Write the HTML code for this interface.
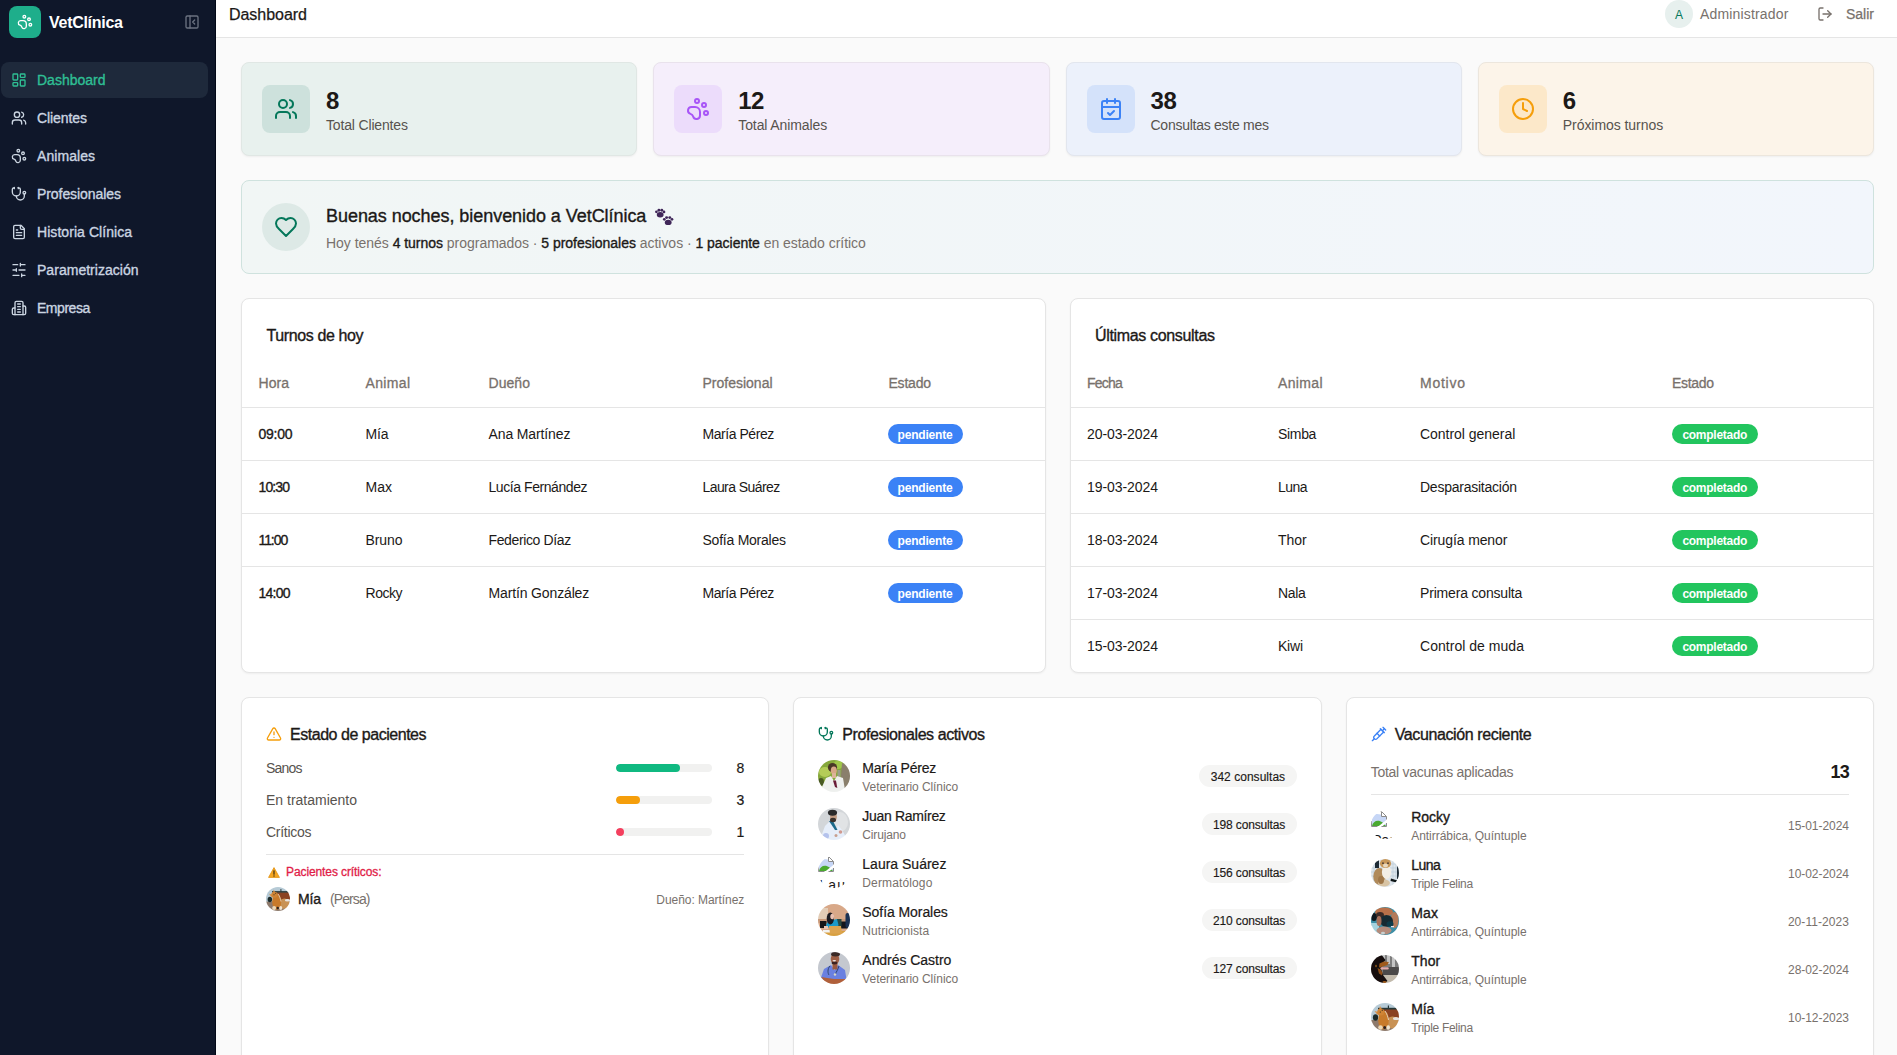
<!DOCTYPE html>
<html lang="es">
<head>
<meta charset="utf-8">
<title>VetClínica - Dashboard</title>
<style>
*{box-sizing:border-box;margin:0;padding:0}
html,body{width:1897px;height:1055px;overflow:hidden}
body{font-family:"Liberation Sans",sans-serif;background:#fafafa;color:#1c1917;font-size:14px;line-height:20px;position:relative}
svg{display:block}
.ic{fill:none;stroke:currentColor;stroke-width:2;stroke-linecap:round;stroke-linejoin:round}
.sb{position:absolute;left:0;top:0;width:216px;height:1055px;background:#0f172a;color:#cbd5e1;border-right:1px solid #020817}
.sb .logo{position:absolute;left:9px;top:6px;width:32px;height:32px;border-radius:8px;background:#1eae8b;color:#fff;display:flex;align-items:center;justify-content:center}
.sb .brand{position:absolute;left:49px;top:12px;font-size:16px;line-height:22px;font-weight:700;color:#fff;white-space:nowrap}
.sb .col{position:absolute;left:184px;top:14px;color:#6b7280}
.nav{position:absolute;left:1px;top:62px;width:207px}
.nav a{display:flex;align-items:center;height:36px;margin-bottom:2px;border-radius:8px;padding-left:10px;color:#cbd5e1;text-decoration:none;font-weight:400;-webkit-text-stroke:.35px;font-size:14px;white-space:nowrap}
.nav a svg{margin-right:10px;flex:none}
.nav a.on{background:#1e293b;color:#2fbf94}
.hd{position:absolute;left:216px;top:0;width:1681px;height:38px;background:#fff;border-bottom:1px solid #e5e5e5}
.hd h1{position:absolute;left:13px;top:4px;font-size:16px;line-height:22px;font-weight:400;-webkit-text-stroke:.25px;color:#1c1917;white-space:nowrap}
.hd .av{position:absolute;left:1449px;top:0;width:28px;height:28px;border-radius:50%;background:#e7f0ee;color:#04775a;font-size:12px;line-height:30px;text-align:center}
.hd .adm{position:absolute;left:1484px;top:4px;color:#78716c;white-space:nowrap}
.hd .out{position:absolute;left:1601px;top:6px;color:#78716c}
.hd .salir{position:absolute;left:1630px;top:4px;color:#78716c;-webkit-text-stroke:.25px;white-space:nowrap}
.card{position:absolute;background:#fff;border:1px solid #e5e5e5;border-radius:8px;box-shadow:0 1px 2px rgba(0,0,0,.05)}
.stat{top:62px;width:396.25px;height:94px}
.stat .ib{position:absolute;left:20px;top:22px;width:48px;height:48px;border-radius:8px;display:flex;align-items:center;justify-content:center}
.stat .n{position:absolute;left:84px;top:22px;font-size:24px;line-height:32px;font-weight:700;color:#1c1917;white-space:nowrap}
.stat .l{position:absolute;left:84px;top:52px;font-size:14px;line-height:20px;color:#57534e;white-space:nowrap}
.ban{left:241px;top:180px;width:1633px;height:94px;border-color:#cfe2de;background:linear-gradient(90deg,#f1f6f5,#f2f6fc);box-shadow:none}
.ban .ib{position:absolute;left:20px;top:22px;width:48px;height:48px;border-radius:50%;background:#dde9e6;color:#04775a;display:flex;align-items:center;justify-content:center}
.ban .t{position:absolute;left:84px;top:21px;font-size:18px;line-height:28px;color:#1c1917;white-space:nowrap;-webkit-text-stroke:.35px}
.ban .s{position:absolute;left:84px;top:52px;font-size:14px;line-height:20px;color:#78716c;white-space:nowrap;letter-spacing:-.030px}
.ban .s b{color:#1c1917;font-weight:400;-webkit-text-stroke:.35px}

.tb{top:298px;width:804.5px;height:375px;overflow:hidden}
.tb h3{position:absolute;left:24.500px;top:25px;font-size:16px;line-height:24px;font-weight:400;-webkit-text-stroke:.35px;color:#1c1917;white-space:nowrap}
.tb .hr{position:absolute;left:0;right:0;top:60px;height:49px;border-bottom:1px solid #e5e5e5;color:#78716c;-webkit-text-stroke:.3px}
.tb .r{position:absolute;left:0;right:0;height:53px;border-bottom:1px solid #e5e5e5;color:#1c1917}
.tb .r.last{border-bottom:0;height:52px}
.tb .hr>span,.tb .r>span{position:absolute;margin-left:-.500px;top:50%;margin-top:-10px;line-height:20px;white-space:nowrap}
.tb b{font-weight:400;-webkit-text-stroke:.35px}
.bd{display:inline-block;vertical-align:top;height:20px;border-radius:10px;color:#fff;font-size:12px;line-height:22px;font-weight:700;text-align:center}
.bd.p{background:#3b82f6;width:75px}
.bd.c{background:#22c55e;width:85.500px}

.bc{top:697px;width:528.33px;height:380px}
.bc h3{position:absolute;left:48px;top:25px;font-size:16px;line-height:24px;font-weight:400;-webkit-text-stroke:.35px;color:#1c1917;white-space:nowrap}
.bc .hi{position:absolute;left:24px;top:28px}
.bc .row{position:absolute;left:24px;right:24px;height:20px;color:#57534e;white-space:nowrap}
.bc .row .v{position:absolute;right:0;top:0;color:#1c1917;-webkit-text-stroke:.2px}
.bc .row .bar{position:absolute;left:350px;top:6px;width:96px;height:8px;border-radius:4px;background:#f1f1f0;overflow:hidden}
.bc .row .bar i{display:block;height:8px;border-radius:4px}
.bc .sep{position:absolute;left:24px;right:24px;height:1px;background:#e5e5e5}
.bc .crit{position:absolute;left:44px;top:166px;font-size:12px;line-height:16px;-webkit-text-stroke:.3px;color:#e11d48;white-space:nowrap}
.bc .warn{position:absolute;left:26px;top:169px}
.avt{position:absolute;border-radius:50%;overflow:hidden}
.bc .pn{position:absolute;left:68px;font-size:14px;line-height:20px;color:#1c1917;white-space:nowrap;-webkit-text-stroke:.2px}
.bc .pn b{font-weight:400;-webkit-text-stroke:.35px}
.bc .ps{position:absolute;left:68px;margin-top:1px;font-size:12px;line-height:16px;color:#78716c;white-space:nowrap}
.bc .pb{position:absolute;right:24px;height:22px;border-radius:11px;background:#f5f5f4;color:#1c1917;font-size:12px;line-height:20px;padding:2px 11.500px 0;white-space:nowrap;-webkit-text-stroke:.15px}
.bc .vd{position:absolute;right:24px;margin-top:1px;font-size:12px;line-height:16px;color:#78716c;white-space:nowrap}
.avt .alt{display:block;margin-top:4px;font-size:14px;line-height:19px;color:#1c1917;-webkit-text-stroke:0;white-space:normal;width:40px;padding-left:1px}
.paw{position:absolute;left:412px;top:27px}
</style>
</head>
<body>
<aside class="sb">
  <div class="logo"><svg class="ic" width="16" height="16" viewBox="0 0 24 24"><circle cx="11" cy="4" r="2"/><circle cx="18" cy="8" r="2"/><circle cx="20" cy="16" r="2"/><path d="M9 10a5 5 0 0 1 5 5v3.500a3.500 3.500 0 0 1-6.840 1.045Q6.520 17.480 4.460 16.840A3.500 3.500 0 0 1 5.500 10Z"/></svg></div>
  <div class="brand"><span style="letter-spacing:-0.28px">VetClínica</span></div>
  <div class="col"><svg class="ic" width="16" height="16" viewBox="0 0 24 24"><rect width="18" height="18" x="3" y="3" rx="2"/><path d="M9 3v18"/><path d="m16 15-3-3 3-3"/></svg></div>
  <nav class="nav">
    <a class="on"><svg class="ic" width="16" height="16" viewBox="0 0 24 24"><rect width="7" height="9" x="3" y="3" rx="1"/><rect width="7" height="5" x="14" y="3" rx="1"/><rect width="7" height="9" x="14" y="12" rx="1"/><rect width="7" height="5" x="3" y="16" rx="1"/></svg><span>Dashboard</span></a>
    <a><svg class="ic" width="16" height="16" viewBox="0 0 24 24"><path d="M16 21v-2a4 4 0 0 0-4-4H6a4 4 0 0 0-4 4v2"/><circle cx="9" cy="7" r="4"/><path d="M22 21v-2a4 4 0 0 0-3-3.870"/><path d="M16 3.130a4 4 0 0 1 0 7.750"/></svg><span><span style="letter-spacing:-0.08px">Clientes</span></span></a>
    <a><svg class="ic" width="16" height="16" viewBox="0 0 24 24"><circle cx="11" cy="4" r="2"/><circle cx="18" cy="8" r="2"/><circle cx="20" cy="16" r="2"/><path d="M9 10a5 5 0 0 1 5 5v3.500a3.500 3.500 0 0 1-6.840 1.045Q6.520 17.480 4.460 16.840A3.500 3.500 0 0 1 5.500 10Z"/></svg><span><span style="letter-spacing:0.06px">Animales</span></span></a>
    <a><svg class="ic" width="16" height="16" viewBox="0 0 24 24"><path d="M11 2v2"/><path d="M5 2v2"/><path d="M5 3H4a2 2 0 0 0-2 2v4a6 6 0 0 0 12 0V5a2 2 0 0 0-2-2h-1"/><path d="M8 15a6 6 0 0 0 12 0v-3"/><circle cx="20" cy="10" r="2"/></svg><span><span style="letter-spacing:-0.07px">Profesionales</span></span></a>
    <a><svg class="ic" width="16" height="16" viewBox="0 0 24 24"><path d="M15 2H6a2 2 0 0 0-2 2v16a2 2 0 0 0 2 2h12a2 2 0 0 0 2-2V7Z"/><path d="M14 2v4a2 2 0 0 0 2 2h4"/><path d="M10 9H8"/><path d="M16 13H8"/><path d="M16 17H8"/></svg><span><span style="letter-spacing:0.06px">Historia Clínica</span></span></a>
    <a><svg class="ic" width="16" height="16" viewBox="0 0 24 24"><path d="M21 4h-7M10 4H3M21 12h-9M8 12H3M21 20h-5M12 20H3M14 2v4M8 10v4M16 18v4"/></svg><span><span style="letter-spacing:0.03px">Parametrización</span></span></a>
    <a><svg class="ic" width="16" height="16" viewBox="0 0 24 24"><path d="M6 22V4a2 2 0 0 1 2-2h8a2 2 0 0 1 2 2v18Z"/><path d="M6 12H4a2 2 0 0 0-2 2v6a2 2 0 0 0 2 2h2"/><path d="M18 9h2a2 2 0 0 1 2 2v9a2 2 0 0 1-2 2h-2"/><path d="M10 6h4"/><path d="M10 10h4"/><path d="M10 14h4"/><path d="M10 18h4"/></svg><span><span style="letter-spacing:-0.47px">Empresa</span></span></a>
  </nav>
</aside>

<header class="hd">
  <h1><span style="letter-spacing:-0.04px">Dashboard</span></h1>
  <div class="av">A</div>
  <div class="adm"><span style="letter-spacing:0.17px">Administrador</span></div>
  <div class="out"><svg class="ic" width="16" height="16" viewBox="0 0 24 24"><path d="M9 21H5a2 2 0 0 1-2-2V5a2 2 0 0 1 2-2h4"/><path d="m16 17 5-5-5-5"/><path d="M21 12H9"/></svg></div>
  <div class="salir">Salir</div>
</header>

<!-- STATS -->
<section class="card stat" style="left:241px;background:#e8f1ee;border-color:#e0e7e4">
  <div class="ib" style="background:#cde1dc;color:#04775a"><svg class="ic" width="24" height="24" viewBox="0 0 24 24"><path d="M16 21v-2a4 4 0 0 0-4-4H6a4 4 0 0 0-4 4v2"/><circle cx="9" cy="7" r="4"/><path d="M22 21v-2a4 4 0 0 0-3-3.870"/><path d="M16 3.130a4 4 0 0 1 0 7.750"/></svg></div>
  <div class="n">8</div><div class="l"><span style="letter-spacing:-0.16px">Total Clientes</span></div>
</section>
<section class="card stat" style="left:653.25px;background:#f5eefb;border-color:#e9e2ec">
  <div class="ib" style="background:#ecdcfb;color:#a855f7"><svg class="ic" width="24" height="24" viewBox="0 0 24 24"><circle cx="11" cy="4" r="2"/><circle cx="18" cy="8" r="2"/><circle cx="20" cy="16" r="2"/><path d="M9 10a5 5 0 0 1 5 5v3.500a3.500 3.500 0 0 1-6.840 1.045Q6.520 17.480 4.460 16.840A3.500 3.500 0 0 1 5.500 10Z"/></svg></div>
  <div class="n"><span style="letter-spacing:-0.70px">12</span></div><div class="l"><span style="letter-spacing:-0.10px">Total Animales</span></div>
</section>
<section class="card stat" style="left:1065.5px;background:#ecf1fb;border-color:#e2e6ee">
  <div class="ib" style="background:#d4e2fa;color:#3b82f6"><svg class="ic" width="24" height="24" viewBox="0 0 24 24"><path d="M8 2v4"/><path d="M16 2v4"/><rect width="18" height="18" x="3" y="4" rx="2"/><path d="M3 10h18"/><path d="m9 16 2 2 4-4"/></svg></div>
  <div class="n"><span style="letter-spacing:-0.40px">38</span></div><div class="l"><span style="letter-spacing:-0.26px">Consultas este mes</span></div>
</section>
<section class="card stat" style="left:1477.75px;background:#fcf4e9;border-color:#ece6dd">
  <div class="ib" style="background:#fce8c9;color:#f59e0b"><svg class="ic" width="24" height="24" viewBox="0 0 24 24"><circle cx="12" cy="12" r="10"/><path d="M12 6v6l4 2"/></svg></div>
  <div class="n">6</div><div class="l"><span style="letter-spacing:-0.05px">Próximos turnos</span></div>
</section>

<!-- BANNER -->
<section class="card ban">
  <div class="ib"><svg class="ic" width="24" height="24" viewBox="0 0 24 24"><path d="M19 14c1.490-1.460 3-3.210 3-5.500A5.500 5.500 0 0 0 16.500 3c-1.760 0-3 .500-4.500 2-1.500-1.500-2.740-2-4.500-2A5.500 5.500 0 0 0 2 8.500c0 2.300 1.500 4.050 3 5.500l7 7Z"/></svg></div>
  <div class="t"><span style="letter-spacing:-0.05px">Buenas noches, bienvenido a VetClínica</span></div>
  <svg class="paw" width="20" height="18" viewBox="0 0 20 18" fill="#3f2658"><ellipse cx="6.200" cy="6.700" rx="3.400" ry="2.700"/><circle cx="2.400" cy="3.800" r="1.350"/><circle cx="4.900" cy="2.300" r="1.450"/><circle cx="7.800" cy="2.300" r="1.450"/><circle cx="10" cy="3.900" r="1.350"/><ellipse cx="14.200" cy="14.400" rx="3.400" ry="2.700"/><circle cx="10.300" cy="11.300" r="1.350"/><circle cx="12.600" cy="9.600" r="1.450"/><circle cx="15.800" cy="9.600" r="1.450"/><circle cx="18" cy="11.300" r="1.350"/></svg>
  <div class="s">Hoy tenés <b>4 turnos</b> programados · <b>5 profesionales</b> activos · <b>1 paciente</b> en estado crítico</div>
</section>

<!-- TABLES -->
<section class="card tb" style="left:241px">
  <h3><span style="letter-spacing:-0.39px">Turnos de hoy</span></h3>
  <div class="hr"><span style="left:17px"><span style="letter-spacing:0.05px">Hora</span></span><span style="left:124px"><span style="letter-spacing:0.34px">Animal</span></span><span style="left:247px"><span style="letter-spacing:0.06px">Dueño</span></span><span style="left:461px">Profesional</span><span style="left:647px"><span style="letter-spacing:-0.22px">Estado</span></span></div>
  <div class="r" style="top:109px"><span style="left:17px"><b><span style="letter-spacing:-0.26px">09:00</span></b></span><span style="left:124px"><span style="letter-spacing:-0.17px">Mía</span></span><span style="left:247px"><span style="letter-spacing:-0.12px">Ana Martínez</span></span><span style="left:461px"><span style="letter-spacing:-0.45px">María Pérez</span></span><span style="left:646px"><i class="bd p" style="font-style:normal"><span style="letter-spacing:-0.21px">pendiente</span></i></span></div>
  <div class="r" style="top:162px"><span style="left:17px"><b><span style="letter-spacing:-0.89px">10:30</span></b></span><span style="left:124px"><span style="letter-spacing:0.02px">Max</span></span><span style="left:247px"><span style="letter-spacing:-0.43px">Lucía Fernández</span></span><span style="left:461px"><span style="letter-spacing:-0.58px">Laura Suárez</span></span><span style="left:646px"><i class="bd p" style="font-style:normal"><span style="letter-spacing:-0.21px">pendiente</span></i></span></div>
  <div class="r" style="top:215px"><span style="left:17px"><b><span style="letter-spacing:-1.08px">11:00</span></b></span><span style="left:124px"><span style="letter-spacing:-0.09px">Bruno</span></span><span style="left:247px"><span style="letter-spacing:-0.37px">Federico Díaz</span></span><span style="left:461px"><span style="letter-spacing:-0.24px">Sofía Morales</span></span><span style="left:646px"><i class="bd p" style="font-style:normal"><span style="letter-spacing:-0.21px">pendiente</span></i></span></div>
  <div class="r last" style="top:268px"><span style="left:17px"><b><span style="letter-spacing:-0.76px">14:00</span></b></span><span style="left:124px"><span style="letter-spacing:-0.48px">Rocky</span></span><span style="left:247px"><span style="letter-spacing:-0.14px">Martín González</span></span><span style="left:461px"><span style="letter-spacing:-0.45px">María Pérez</span></span><span style="left:646px"><i class="bd p" style="font-style:normal"><span style="letter-spacing:-0.21px">pendiente</span></i></span></div>
</section>
<section class="card tb" style="left:1069.5px">
  <h3><span style="letter-spacing:-0.34px">Últimas consultas</span></h3>
  <div class="hr"><span style="left:17px"><span style="letter-spacing:-0.78px">Fecha</span></span><span style="left:208px"><span style="letter-spacing:0.34px">Animal</span></span><span style="left:350px"><span style="letter-spacing:0.75px">Motivo</span></span><span style="left:602px"><span style="letter-spacing:-0.32px">Estado</span></span></div>
  <div class="r" style="top:109px"><span style="left:17px"><span style="letter-spacing:-0.07px">20-03-2024</span></span><span style="left:208px"><span style="letter-spacing:-0.32px">Simba</span></span><span style="left:350px"><span style="letter-spacing:-0.03px">Control general</span></span><span style="left:602px"><i class="bd c" style="font-style:normal"><span style="letter-spacing:-0.26px">completado</span></i></span></div>
  <div class="r" style="top:162px"><span style="left:17px"><span style="letter-spacing:-0.07px">19-03-2024</span></span><span style="left:208px"><span style="letter-spacing:-0.55px">Luna</span></span><span style="left:350px"><span style="letter-spacing:-0.24px">Desparasitación</span></span><span style="left:602px"><i class="bd c" style="font-style:normal"><span style="letter-spacing:-0.26px">completado</span></i></span></div>
  <div class="r" style="top:215px"><span style="left:17px"><span style="letter-spacing:-0.07px">18-03-2024</span></span><span style="left:208px"><span style="letter-spacing:-0.07px">Thor</span></span><span style="left:350px"><span style="letter-spacing:-0.11px">Cirugía menor</span></span><span style="left:602px"><i class="bd c" style="font-style:normal"><span style="letter-spacing:-0.26px">completado</span></i></span></div>
  <div class="r" style="top:268px"><span style="left:17px"><span style="letter-spacing:-0.07px">17-03-2024</span></span><span style="left:208px"><span style="letter-spacing:-0.33px">Nala</span></span><span style="left:350px"><span style="letter-spacing:-0.18px">Primera consulta</span></span><span style="left:602px"><i class="bd c" style="font-style:normal"><span style="letter-spacing:-0.26px">completado</span></i></span></div>
  <div class="r last" style="top:321px"><span style="left:17px"><span style="letter-spacing:-0.07px">15-03-2024</span></span><span style="left:208px"><span style="letter-spacing:-0.22px">Kiwi</span></span><span style="left:350px"><span style="letter-spacing:0.03px">Control de muda</span></span><span style="left:602px"><i class="bd c" style="font-style:normal"><span style="letter-spacing:-0.26px">completado</span></i></span></div>
</section>

<!-- BOTTOM -->
<section class="card bc" style="left:241px">
  <div class="hi" style="color:#f59e0b"><svg class="ic" width="16" height="16" viewBox="0 0 24 24"><path d="m21.730 18-8-14a2 2 0 0 0-3.480 0l-8 14A2 2 0 0 0 4 21h16a2 2 0 0 0 1.730-3"/><path d="M12 9v4"/><path d="M12 17h.01"/></svg></div>
  <h3><span style="letter-spacing:-0.47px">Estado de pacientes</span></h3>
  <div class="row" style="top:60px"><span><span style="letter-spacing:-0.80px">Sanos</span></span><div class="bar"><i style="width:64px;background:#10b981"></i></div><span class="v">8</span></div>
  <div class="row" style="top:92px"><span>En tratamiento</span><div class="bar"><i style="width:24px;background:#f59e0b"></i></div><span class="v">3</span></div>
  <div class="row" style="top:124px"><span><span style="letter-spacing:-0.28px">Críticos</span></span><div class="bar"><i style="width:8px;background:#f43f5e"></i></div><span class="v">1</span></div>
  <div class="sep" style="top:156px"></div>
  <div class="warn"><svg width="12" height="11" viewBox="0 0 13 11" preserveAspectRatio="none"><path d="M6.500 .600 12.400 10.400H.600Z" fill="#f5a623" stroke="#e08e0b" stroke-width=".800" stroke-linejoin="round"/><path d="M6.500 3.800v3.400" stroke="#3a2a10" stroke-width="1.300" stroke-linecap="round"/><circle cx="6.500" cy="8.900" r=".750" fill="#3a2a10"/></svg></div>
  <div class="crit"><span style="letter-spacing:-0.10px">Pacientes críticos:</span></div>
  <div class="avt" style="left:24px;top:189px;width:24px;height:24px"><svg width="24" height="24" viewBox="0 0 28 28"><defs><filter id="f1" x="-10%" y="-10%" width="120%" height="120%"><feGaussianBlur stdDeviation="0.7"/></filter></defs><g filter="url(#f1)"><rect x="-2" y="-2" width="32" height="32" fill="#b6cad6"/><rect x="9" y="6" width="21" height="9" fill="#8a4222"/><rect x="7" y="4.800" width="19" height="1.700" fill="#283838"/><rect x="16.800" y="2.500" width="1.200" height="3" fill="#283838"/><rect x="-2" y="17" width="32" height="13" fill="#8e7a6c"/><ellipse cx="4.500" cy="14.500" rx="2.600" ry="3.200" fill="#1c2c2a"/><ellipse cx="21.500" cy="19.500" rx="6.500" ry="6" fill="#c89254"/><ellipse cx="25" cy="15.500" rx="3" ry="1.500" fill="#e8e4e0"/><ellipse cx="12.500" cy="17" rx="5.300" ry="9.500" fill="#c87a2a"/><path d="M3.500 8 7.500 9 6.500 12ZM9 2.800 11 7 8 8Z" fill="#d89048"/><ellipse cx="9.800" cy="9" rx="3.600" ry="3.600" fill="#d08434"/><circle cx="9.300" cy="9" r=".600" fill="#2a2a20"/><circle cx="11.300" cy="7.200" r=".600" fill="#2a2a20"/><ellipse cx="9.500" cy="24.500" rx="2.300" ry="2.200" fill="#ecd8b8"/><ellipse cx="17.200" cy="24.500" rx="1.800" ry="2.200" fill="#f0e4d0"/><ellipse cx="13.700" cy="24.500" rx="1.400" ry="1.600" fill="#2a2020"/><path d="M14 8C16 11 17 14 17.500 17" stroke="#e8e4e0" stroke-width=".800" fill="none"/></g></svg></div>
  <div class="pn" style="left:56px;top:191px"><b><span style="letter-spacing:-0.17px">Mía</span></b></div>
  <div class="pn" style="left:88px;top:191px;color:#78716c;-webkit-text-stroke:0"><span style="letter-spacing:-0.90px">(Persa)</span></div>
  <div class="vd" style="top:193px"><span style="letter-spacing:-0.05px">Dueño: Martínez</span></div>
</section>
<section class="card bc" style="left:793.33px">
  <div class="hi" style="color:#04775a"><svg class="ic" width="16" height="16" viewBox="0 0 24 24"><path d="M11 2v2"/><path d="M5 2v2"/><path d="M5 3H4a2 2 0 0 0-2 2v4a6 6 0 0 0 12 0V5a2 2 0 0 0-2-2h-1"/><path d="M8 15a6 6 0 0 0 12 0v-3"/><circle cx="20" cy="10" r="2"/></svg></div>
  <h3><span style="letter-spacing:-0.43px">Profesionales activos</span></h3>
  <div class="avt" style="left:24px;top:62px;width:32px;height:32px"><svg width="32" height="32" viewBox="0 0 32 32"><defs><filter id="f2" x="-10%" y="-10%" width="120%" height="120%"><feGaussianBlur stdDeviation="0.7"/></filter></defs><g filter="url(#f2)"><rect x="-2" y="-2" width="36" height="36" fill="#86a83a"/><ellipse cx="7" cy="12" rx="6" ry="5" fill="#b4cc58"/><ellipse cx="20" cy="5" rx="5" ry="4" fill="#a0c84a"/><ellipse cx="3" cy="22" rx="3" ry="4" fill="#4a5a24"/><path d="M24 3 32 6V30L25 29 23 16Z" fill="#8a7f6c"/><rect x="19.500" y="10" width="3" height="8" fill="#9a9c8c"/><ellipse cx="14.500" cy="7.500" rx="4.600" ry="4.600" fill="#4a3826"/><ellipse cx="15.800" cy="10.500" rx="3" ry="4" fill="#d8a888"/><rect x="14" y="13" width="4" height="5" fill="#dcb49a"/><path d="M4 27 8 18 13 16 16 21 19 16 25 18 27 30 20 34H9Z" fill="#eef0ee"/><path d="M15 20.500H18L19.300 28 17 27Z" fill="#6a1f38"/></g></svg></div><div class="pn" style="top:60px"><span style="letter-spacing:-0.23px">María Pérez</span></div><div class="ps" style="top:80px"><span style="letter-spacing:-0.09px">Veterinario Clínico</span></div><div class="pb" style="top:67px"><span style="letter-spacing:0.03px">342 consultas</span></div>
  <div class="avt" style="left:24px;top:110px;width:32px;height:32px"><svg width="32" height="32" viewBox="0 0 32 32"><defs><filter id="f3" x="-10%" y="-10%" width="120%" height="120%"><feGaussianBlur stdDeviation="0.7"/></filter></defs><g filter="url(#f3)"><rect x="-2" y="-2" width="36" height="36" fill="#d3d6d9"/><ellipse cx="22" cy="14" rx="8" ry="10" fill="#e1e3e5"/><path d="M4 26 7 18 11 14 14 16 18 23 20 17 24 22 28 29 22 34H9Z" fill="#e6eefa"/><ellipse cx="8" cy="28" rx="3" ry="3" fill="#b4c2ec"/><path d="M11 13H15L19.500 22H17Z" fill="#1f6a8a"/><ellipse cx="15.500" cy="9" rx="3.400" ry="4.200" fill="#c09a80"/><ellipse cx="14.500" cy="4.800" rx="4.600" ry="3" fill="#2a2a2c"/><ellipse cx="15" cy="12" rx="3" ry="2.200" fill="#3a302c"/><circle cx="22.500" cy="24" r="1.800" fill="#d09a90"/><circle cx="18" cy="27.500" r="1.500" fill="#c8a090"/></g></svg></div><div class="pn" style="top:108px"><span style="letter-spacing:-0.33px">Juan Ramírez</span></div><div class="ps" style="top:128px"><span style="letter-spacing:-0.17px">Cirujano</span></div><div class="pb" style="top:115px"><span style="letter-spacing:-0.15px">198 consultas</span></div>
  <div class="avt" style="left:24px;top:158px;width:32px;height:32px"><svg width="16" height="16" viewBox="0 0 16 16"><path d="M10.500 .500H.500V15.500H15.500V5.500Z" fill="#fff"/><path d="M1 4.500C3 3 6 2.500 10 3.500L15 6V15H1Z" fill="#c6d6f6"/><path d="M1 15C2 10 7 8 11.500 11.500L15 15Z" fill="#4aaa30"/><path d="M6.500 16 16 8.500V11.500L10.500 16Z" fill="#fff"/><path d="M10.500 .500 15.500 5.500H10.500Z" fill="#fff" stroke="#8c8c8c"/><path d="M10.500 .500H9M15.500 5.500V8.500M15.500 12V15.500H10.500M6.500 15.500H.500V10" stroke="#8c8c8c" fill="none"/></svg><span class="alt"><span style="letter-spacing:1.20px">Laura Suárez</span></span></div><div class="pn" style="top:156px">Laura Suárez</div><div class="ps" style="top:176px"><span style="letter-spacing:0.13px">Dermatólogo</span></div><div class="pb" style="top:163px"><span style="letter-spacing:-0.15px">156 consultas</span></div>
  <div class="avt" style="left:24px;top:206px;width:32px;height:32px"><svg width="32" height="32" viewBox="0 0 32 32"><defs><filter id="f4" x="-10%" y="-10%" width="120%" height="120%"><feGaussianBlur stdDeviation="0.7"/></filter></defs><g filter="url(#f4)"><rect x="-2" y="-2" width="36" height="36" fill="#d8a888"/><rect x="-1" y="4" width="11" height="12" fill="#e2ccb6"/><rect x="-2" y="15" width="36" height="4" fill="#c89878"/><rect x="2" y="17" width="6.500" height="7" fill="#161616"/><rect x="23" y="17.500" width="8" height="7" fill="#14181e"/><rect x="27.500" y="9" width="6" height="15" rx="2" fill="#1a3052"/><rect x="19" y="15" width="4.500" height="7.500" fill="#2a4a42"/><path d="M8 21 10 17.500 19 15 20.500 21 19.500 23.500H9Z" fill="#1a9ac8"/><ellipse cx="12.300" cy="14.500" rx="3.600" ry="6" fill="#1a1a22"/><ellipse cx="14.200" cy="12.500" rx="1.900" ry="2.800" fill="#e8c0b0"/><rect x="-2" y="27" width="36" height="8" fill="#d8a040"/><rect x="5" y="26" width="7" height="2.500" fill="#f2f2f2"/><path d="M11 22H23L24 29.500H12Z" fill="#dca450"/><rect x="6" y="22" width="4" height="3" fill="#e8c4b0"/></g></svg></div><div class="pn" style="top:204px"><span style="letter-spacing:-0.07px">Sofía Morales</span></div><div class="ps" style="top:224px"><span style="letter-spacing:0.06px">Nutricionista</span></div><div class="pb" style="top:211px"><span style="letter-spacing:-0.15px">210 consultas</span></div>
  <div class="avt" style="left:24px;top:254px;width:32px;height:32px"><svg width="32" height="32" viewBox="0 0 32 32"><defs><filter id="f5" x="-10%" y="-10%" width="120%" height="120%"><feGaussianBlur stdDeviation="0.7"/></filter></defs><g filter="url(#f5)"><rect x="-2" y="-2" width="36" height="36" fill="#c4c8cf"/><path d="M3 25.500 6 17 13 13 16.500 18 20 13 27 18 28.500 27.500H3Z" fill="#6a80e0"/><path d="M3 25 16 27 28 27 24 34H10Z" fill="#b0603a"/><rect x="14.500" y="9" width="5" height="8.500" fill="#9a5a40"/><ellipse cx="17" cy="7" rx="4.300" ry="5.200" fill="#9e5e44"/><ellipse cx="17.500" cy="2.300" rx="4.400" ry="2.200" fill="#3a2a28"/><ellipse cx="16.500" cy="11" rx="3" ry="1.400" fill="#3a2420"/><ellipse cx="16.300" cy="8.800" rx="1.800" ry=".700" fill="#f0e8e4"/><path d="M12 14C9 17 10 22 11 23M21 14C20 18 18 20 17.500 22" stroke="#2a4060" stroke-width=".900" fill="none"/><circle cx="17" cy="22.500" r="1.200" fill="#d8d8c8"/></g></svg></div><div class="pn" style="top:252px"><span style="letter-spacing:-0.04px">Andrés Castro</span></div><div class="ps" style="top:272px"><span style="letter-spacing:-0.09px">Veterinario Clínico</span></div><div class="pb" style="top:259px"><span style="letter-spacing:-0.15px">127 consultas</span></div>
</section>
<section class="card bc" style="left:1345.67px">
  <div class="hi" style="color:#3b82f6"><svg class="ic" width="16" height="16" viewBox="0 0 24 24"><path d="m18 2 4 4"/><path d="m17 7 3-3"/><path d="M19 9 8.700 19.300c-1 1-2.500 1-3.400 0l-.600-.600c-1-1-1-2.500 0-3.400L15 5"/><path d="m9 11 4 4"/><path d="m5 19-3 3"/><path d="m14 4 6 6"/></svg></div>
  <h3><span style="letter-spacing:-0.38px">Vacunación reciente</span></h3>
  <div class="row" style="top:60px;height:28px;line-height:28px;color:#78716c"><span><span style="letter-spacing:-0.26px">Total vacunas aplicadas</span></span><span class="v" style="font-size:18px;font-weight:700;-webkit-text-stroke:0"><span style="letter-spacing:-0.73px">13</span></span></div>
  <div class="sep" style="top:96px"></div>
  <div class="avt" style="left:24px;top:113px;width:28px;height:28px"><svg width="16" height="16" viewBox="0 0 16 16"><path d="M10.500 .500H.500V15.500H15.500V5.500Z" fill="#fff"/><path d="M1 4.500C3 3 6 2.500 10 3.500L15 6V15H1Z" fill="#c6d6f6"/><path d="M1 15C2 10 7 8 11.500 11.500L15 15Z" fill="#4aaa30"/><path d="M6.500 16 16 8.500V11.500L10.500 16Z" fill="#fff"/><path d="M10.500 .500 15.500 5.500H10.500Z" fill="#fff" stroke="#8c8c8c"/><path d="M10.500 .500H9M15.500 5.500V8.500M15.500 12V15.500H10.500M6.500 15.500H.500V10" stroke="#8c8c8c" fill="none"/></svg><span class="alt"><span style="letter-spacing:-0.41px">Rocky</span></span></div><div class="pn" style="left:64.500px;top:109px"><b>Rocky</b></div><div class="ps" style="left:64.500px;top:129px"><span style="letter-spacing:-0.03px">Antirrábica, Quíntuple</span></div><div class="vd" style="top:119px"><span style="letter-spacing:-0.04px">15-01-2024</span></div>
  <div class="avt" style="left:24px;top:161px;width:28px;height:28px"><svg width="28" height="28" viewBox="0 0 28 28"><defs><filter id="f6" x="-10%" y="-10%" width="120%" height="120%"><feGaussianBlur stdDeviation="0.7"/></filter></defs><g filter="url(#f6)"><rect x="-2" y="-2" width="32" height="32" fill="#dfe6ec"/><path d="M0 5H28M0 9H28M0 13H28M0 17H28M22 0V28M25 0V28M3 0V28" stroke="#bccbda" stroke-width=".700"/><rect x="4" y="-1" width="4" height="10" fill="#1c2c34"/><rect x="26" y="6" width="3" height="14" fill="#1c2c34"/><path d="M20 19.500 26.500 21.500 25.500 23.500 19.500 22Z" fill="#101418"/><ellipse cx="8.500" cy="17.500" rx="6.200" ry="8.500" fill="#b08a5a"/><ellipse cx="15.500" cy="13" rx="4.600" ry="7" fill="#f2eee6"/><ellipse cx="14.500" cy="4.500" rx="5.600" ry="4.500" fill="#c8985a"/><ellipse cx="14.500" cy="6.500" rx="2.500" ry="2" fill="#e8d8c0"/><circle cx="12" cy="4.200" r=".900" fill="#4a3a30"/><circle cx="17" cy="4.200" r=".900" fill="#4a3a30"/><ellipse cx="13" cy="24" rx="6" ry="3.500" fill="#d8c4a4"/><ellipse cx="10" cy="21" rx="3" ry="4" fill="#a07848"/></g></svg></div><div class="pn" style="left:64.500px;top:157px"><b><span style="letter-spacing:-0.47px">Luna</span></b></div><div class="ps" style="left:64.500px;top:177px"><span style="letter-spacing:-0.30px">Triple Felina</span></div><div class="vd" style="top:167px"><span style="letter-spacing:-0.04px">10-02-2024</span></div>
  <div class="avt" style="left:24px;top:209px;width:28px;height:28px"><svg width="28" height="28" viewBox="0 0 28 28"><defs><filter id="f7" x="-10%" y="-10%" width="120%" height="120%"><feGaussianBlur stdDeviation="0.7"/></filter></defs><g filter="url(#f7)"><rect x="-2" y="-2" width="32" height="32" fill="#3a8ea6"/><path d="M0 16H8V29L2 24Z" fill="#a4d2de"/><ellipse cx="3" cy="10" rx="3" ry="4" fill="#10181e"/><ellipse cx="13" cy="5" rx="9" ry="4.500" fill="#b87048"/><ellipse cx="23.500" cy="13" rx="4" ry="8" fill="#b47a5a"/><ellipse cx="9" cy="8" rx="4" ry="3" fill="#3a2a28"/><ellipse cx="15.500" cy="14" rx="6.500" ry="6" fill="#182a32"/><ellipse cx="19" cy="17" rx="3.500" ry="2.800" fill="#0e3a4a"/><ellipse cx="13" cy="23.500" rx="7.500" ry="4" fill="#b48c7c"/><ellipse cx="8" cy="14" rx="2.500" ry="5" fill="#a8705a"/><rect x="20" y="19" width="3" height="1.200" fill="#e8e0e8"/><ellipse cx="12" cy="26" rx="2" ry="1.200" fill="#c8d0d0"/></g></svg></div><div class="pn" style="left:64.500px;top:205px"><b><span style="letter-spacing:0.15px">Max</span></b></div><div class="ps" style="left:64.500px;top:225px"><span style="letter-spacing:-0.03px">Antirrábica, Quíntuple</span></div><div class="vd" style="top:215px"><span style="letter-spacing:0.06px">20-11-2023</span></div>
  <div class="avt" style="left:24px;top:257px;width:28px;height:28px"><svg width="28" height="28" viewBox="0 0 28 28"><defs><filter id="f8" x="-10%" y="-10%" width="120%" height="120%"><feGaussianBlur stdDeviation="0.7"/></filter></defs><g filter="url(#f8)"><rect x="-2" y="-2" width="32" height="32" fill="#7c7c7c"/><path d="M11 0H14V10H11ZM16 0H19V9H16ZM21 2H24V12H21Z" fill="#c4c4c4"/><rect x="12" y="12" width="18" height="8" fill="#4c4a48"/><rect x="10" y="20" width="20" height="10" fill="#c2baac"/><path d="M-1-1H10L14.500 5 12 8.500 10 14 12 20 16.500 26 12 29H-1Z" fill="#131110"/><path d="M8.500 8.500 13 6.500 17.800 7 16.500 10 12 11.500 8 12.500Z" fill="#a05a1a"/><rect x="9.300" y="12.300" width="8.500" height="2.300" rx="1.100" fill="#e4aaaa"/><path d="M6.500 13 9.500 14.500 11.500 17.500 11 20.500 8 18.500Z" fill="#8e4c14"/><ellipse cx="5" cy="11" rx="1" ry="1.200" fill="#7a4a1a"/><ellipse cx="13.500" cy="27" rx="2" ry="1" fill="#a05a1a"/></g></svg></div><div class="pn" style="left:64.500px;top:253px"><b><span style="letter-spacing:0.07px">Thor</span></b></div><div class="ps" style="left:64.500px;top:273px"><span style="letter-spacing:-0.03px">Antirrábica, Quíntuple</span></div><div class="vd" style="top:263px"><span style="letter-spacing:-0.04px">28-02-2024</span></div>
  <div class="avt" style="left:24px;top:305px;width:28px;height:28px"><svg width="28" height="28" viewBox="0 0 28 28"><defs><filter id="f9" x="-10%" y="-10%" width="120%" height="120%"><feGaussianBlur stdDeviation="0.7"/></filter></defs><g filter="url(#f9)"><rect x="-2" y="-2" width="32" height="32" fill="#b6cad6"/><rect x="9" y="6" width="21" height="9" fill="#8a4222"/><rect x="7" y="4.800" width="19" height="1.700" fill="#283838"/><rect x="16.800" y="2.500" width="1.200" height="3" fill="#283838"/><rect x="-2" y="17" width="32" height="13" fill="#8e7a6c"/><ellipse cx="4.500" cy="14.500" rx="2.600" ry="3.200" fill="#1c2c2a"/><ellipse cx="21.500" cy="19.500" rx="6.500" ry="6" fill="#c89254"/><ellipse cx="25" cy="15.500" rx="3" ry="1.500" fill="#e8e4e0"/><ellipse cx="12.500" cy="17" rx="5.300" ry="9.500" fill="#c87a2a"/><path d="M3.500 8 7.500 9 6.500 12ZM9 2.800 11 7 8 8Z" fill="#d89048"/><ellipse cx="9.800" cy="9" rx="3.600" ry="3.600" fill="#d08434"/><circle cx="9.300" cy="9" r=".600" fill="#2a2a20"/><circle cx="11.300" cy="7.200" r=".600" fill="#2a2a20"/><ellipse cx="9.500" cy="24.500" rx="2.300" ry="2.200" fill="#ecd8b8"/><ellipse cx="17.200" cy="24.500" rx="1.800" ry="2.200" fill="#f0e4d0"/><ellipse cx="13.700" cy="24.500" rx="1.400" ry="1.600" fill="#2a2020"/><path d="M14 8C16 11 17 14 17.500 17" stroke="#e8e4e0" stroke-width=".800" fill="none"/></g></svg></div><div class="pn" style="left:64.500px;top:301px"><b><span style="letter-spacing:-0.07px">Mía</span></b></div><div class="ps" style="left:64.500px;top:321px"><span style="letter-spacing:-0.30px">Triple Felina</span></div><div class="vd" style="top:311px"><span style="letter-spacing:-0.04px">10-12-2023</span></div>
</section>

</body>
</html>
